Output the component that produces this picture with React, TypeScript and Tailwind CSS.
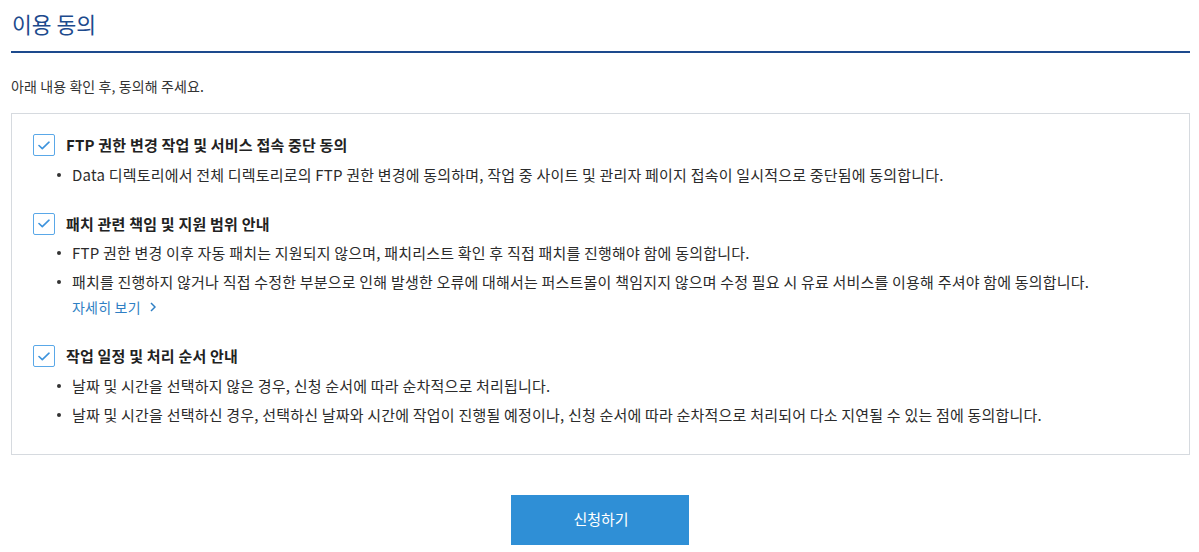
import React from 'react';

const font = { fontFamily: '"Noto Sans CJK KR", "Noto Sans", sans-serif' };

const Check: React.FC = () => (
  <span className="w-[22px] h-[22px] shrink-0 border border-[#5aa8e8] rounded-[2px] bg-white flex items-center justify-center">
    <svg width="12" height="9" viewBox="0 0 12 9" fill="none">
      <path d="M1 4.5 L4.3 7.6 L11 1.2" stroke="#3d93dd" strokeWidth="1.6" strokeLinecap="round" strokeLinejoin="round" />
    </svg>
  </span>
);

const Bullet: React.FC<{ children: React.ReactNode }> = ({ children }) => (
  <li className="flex items-start text-[15px] leading-[22px] tracking-[0.2px] text-[#2b2b2b]">
    <span className="w-[4px] h-[4px] rounded-full bg-[#333] mt-[9px] ml-[24px] mr-[11px] shrink-0"></span>
    <span>{children}</span>
  </li>
);

const Section: React.FC<{ title: string; children: React.ReactNode }> = ({ title, children }) => (
  <div>
    <div className="flex items-center gap-[11px]">
      <Check />
      <span className="text-[15px] tracking-[0.2px] font-bold text-[#222]">{title}</span>
    </div>
    <ul className="mt-[7px] space-y-[7px]">{children}</ul>
  </div>
);

const App: React.FC = () => {
  return (
    <div className="bg-white w-[1199px] h-[552px] px-[11px]" style={font}>
      <h2 className="text-[21.5px] leading-[30px] pt-[9px] pb-[12px] pl-[1px] text-[#1d4a8d] border-b-2 border-[#1d4a8d] w-[1179px]">
        이용 동의
      </h2>
      <p className="mt-[22px] text-[14px] leading-[22px] tracking-[0.1px] text-[#333]">아래 내용 확인 후, 동의해 주세요.</p>

      <div className="mt-[16px] border border-[#d6dadf] w-[1179px] pt-[20px] pb-[28px] pl-[21px] space-y-[27px]">
        <Section title="FTP 권한 변경 작업 및 서비스 접속 중단 동의">
          <Bullet>Data 디렉토리에서 전체 디렉토리로의 FTP 권한 변경에 동의하며, 작업 중 사이트 및 관리자 페이지 접속이 일시적으로 중단됨에 동의합니다.</Bullet>
        </Section>
        <Section title="패치 관련 책임 및 지원 범위 안내">
          <Bullet>FTP 권한 변경 이후 자동 패치는 지원되지 않으며, 패치리스트 확인 후 직접 패치를 진행해야 함에 동의합니다.</Bullet>
          <Bullet>
            패치를 진행하지 않거나 직접 수정한 부분으로 인해 발생한 오류에 대해서는 퍼스트몰이 책임지지 않으며 수정 필요 시 유료 서비스를 이용해 주셔야 함에 동의합니다.
            <a className="flex items-center gap-[9px] text-[14px] text-[#2f7fc4] mt-[3px] cursor-pointer">
              자세히 보기
              <svg width="6" height="10" viewBox="0 0 6 10" fill="none">
                <path d="M1 1 L5 5 L1 9" stroke="#2f7fc4" strokeWidth="1.5" />
              </svg>
            </a>
          </Bullet>
        </Section>
        <Section title="작업 일정 및 처리 순서 안내">
          <Bullet>날짜 및 시간을 선택하지 않은 경우, 신청 순서에 따라 순차적으로 처리됩니다.</Bullet>
          <Bullet>날짜 및 시간을 선택하신 경우, 선택하신 날짜와 시간에 작업이 진행될 예정이나, 신청 순서에 따라 순차적으로 처리되어 다소 지연될 수 있는 점에 동의합니다.</Bullet>
        </Section>
      </div>

      <div className="flex justify-center mt-[40px]">
        <button className="w-[178px] h-[50px] bg-[#2f8fd6] text-white text-[15px] pl-[3px]">신청하기</button>
      </div>
    </div>
  );
};

export default App;
